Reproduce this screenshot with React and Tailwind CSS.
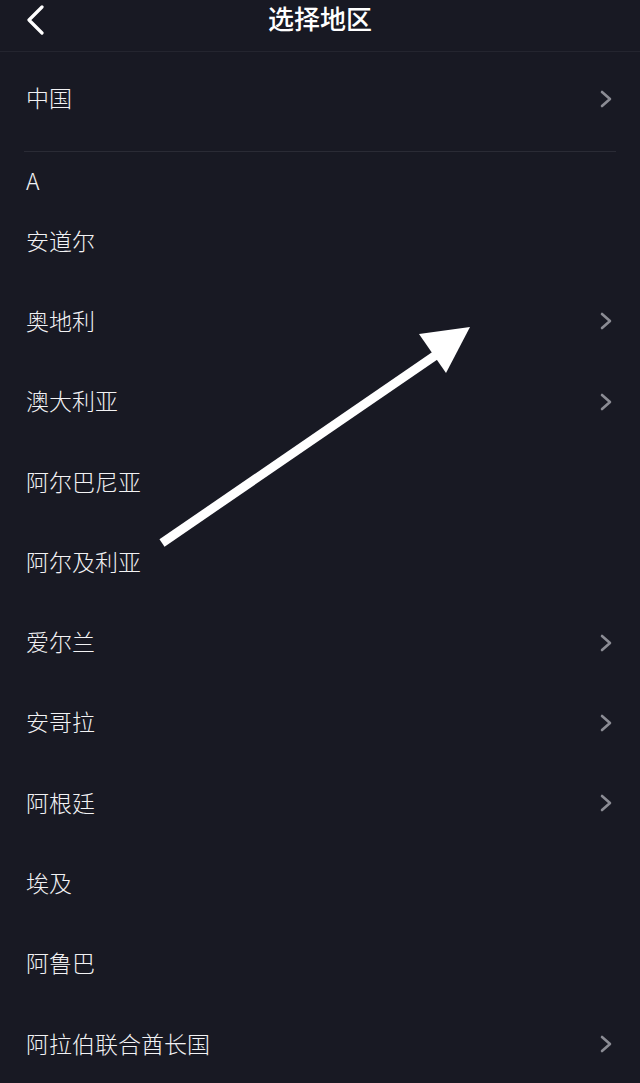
const regions = [
  { name: '安道尔', more: false },
  { name: '奥地利', more: true },
  { name: '澳大利亚', more: true },
  { name: '阿尔巴尼亚', more: false },
  { name: '阿尔及利亚', more: false },
  { name: '爱尔兰', more: true },
  { name: '安哥拉', more: true },
  { name: '阿根廷', more: true },
  { name: '埃及', more: false },
  { name: '阿鲁巴', more: false },
  { name: '阿拉伯联合酋长国', more: true },
];

function Arrow() {
  return (
    <svg className="absolute left-0 top-0 pointer-events-none" width="640" height="1083" viewBox="0 0 640 1083">
      <line x1="162" y1="543" x2="436" y2="355" stroke="#ffffff" strokeWidth="9" />
      <polygon points="419,334 470,327 446,373" fill="#ffffff" />
    </svg>
  );
}

function More() {
  return (
    <svg width="14" height="18" viewBox="0 0 14 18" className="shrink-0">
      <path d="M3 2 L11 9 L3 16" fill="none" stroke="#8b8c94" strokeWidth="2.6" strokeLinecap="round" strokeLinejoin="round" />
    </svg>
  );
}

function Row({ name, more }) {
  return (
    <div className="h-[80.3px] flex items-center justify-between pl-[26px] pr-[27px]">
      <span className="text-[23px] leading-none font-light text-[#f2f2f4] -mt-[2px]">{name}</span>
      {more && <More />}
    </div>
  );
}

export default function App() {
  return (
    <div
      className="relative w-[640px] h-[1083px] overflow-hidden bg-[#181923]"
      style={{ fontFamily: '"Noto Sans CJK SC", "Noto Sans", sans-serif' }}
    >
      {/* Header */}
      <div className="relative h-[52px] flex items-center justify-center border-b border-[#24252f]">
        <svg width="22" height="30" viewBox="0 0 22 30" className="absolute left-[25px] top-[5px]">
          <path d="M17 2 L4 15 L17 28" fill="none" stroke="#ffffff" strokeWidth="3.2" strokeLinecap="round" strokeLinejoin="round" />
        </svg>
        <span className="text-[26px] leading-none font-medium text-white -mt-[15px]">选择地区</span>
      </div>

      <div className="h-[99px] flex items-center justify-between pl-[26px] pr-[27px] pb-[6px]">
        <span className="text-[23px] leading-none font-light text-[#f2f2f4] -mt-[2px]">中国</span>
        <More />
      </div>
      <div className="mx-[24px] h-px bg-[#2a2b35]" />

      <div className="h-[49px] flex items-center pl-[26px] pt-[10px]">
        <span className="text-[23px] leading-none font-light text-[#f2f2f4] -mt-[3px]">A</span>
      </div>

      {regions.map(r => (
        <Row key={r.name} name={r.name} more={r.more} />
      ))}

      <Arrow />
    </div>
  );
}
